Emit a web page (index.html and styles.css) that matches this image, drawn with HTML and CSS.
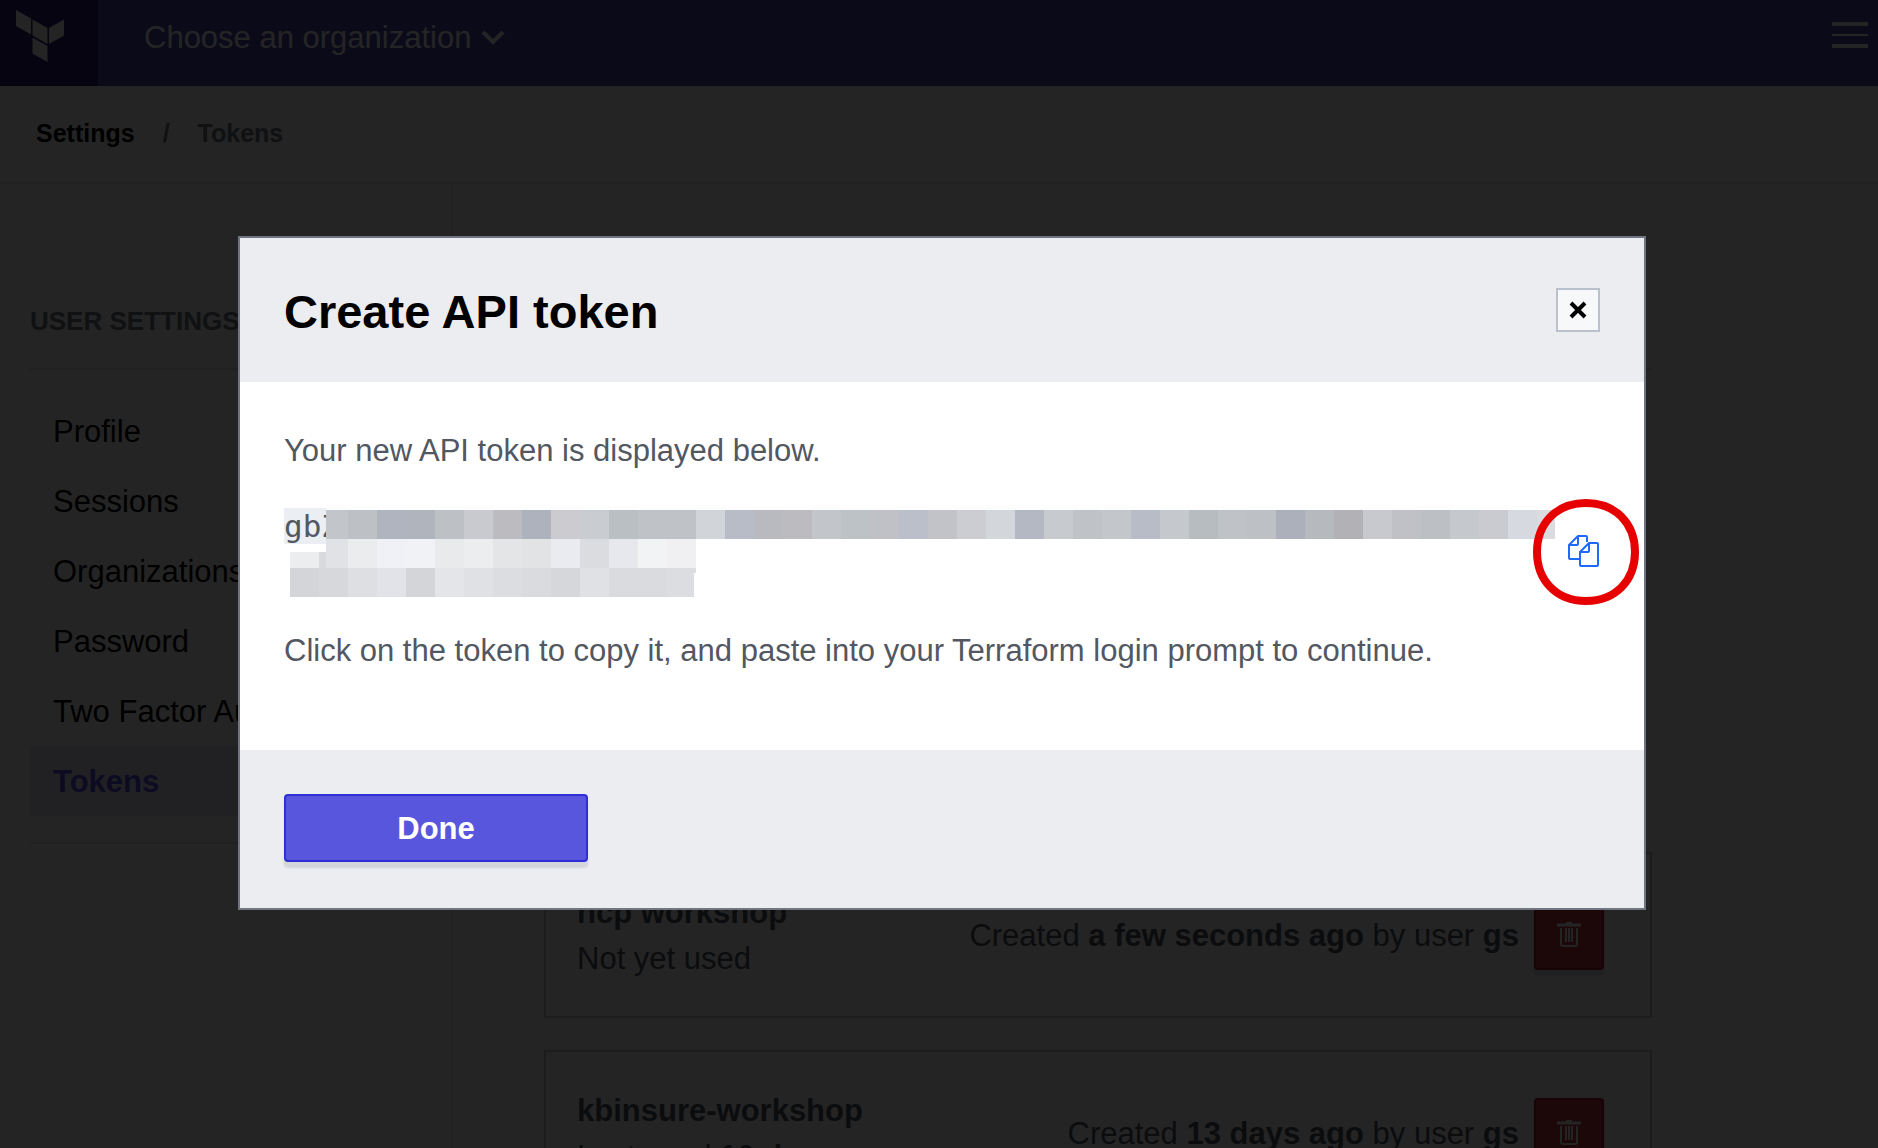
FILE: index.html
```html
<!DOCTYPE html>
<html lang="en">
<head>
<meta charset="utf-8">
<title>Tokens | Settings | Terraform Cloud</title>
<link rel="stylesheet" href="styles.css">
</head>
<body>
<div class="app">
  <header class="topbar">
    <a class="logo" href="#" aria-label="Terraform">
      <svg width="48" height="52" viewBox="0 0 48 52" fill="currentColor" aria-hidden="true">
        <path d="M0 0l15 8.600v16L0 16zM16.500 9.500l15 8.600v16l-15-8.600zM33 18.100l15-8.600v16l-15 8.600zM16.500 27.500l15 8.600V52l-15-8.600z"/>
      </svg>
    </a>
    <button class="org-picker" type="button">Choose an organization
      <svg width="24" height="16" viewBox="0 0 24 16" fill="none" stroke="currentColor" stroke-width="4" aria-hidden="true"><path d="M2 2l10 10L22 2"/></svg>
    </button>
    <button class="menu-button" type="button" aria-label="Menu">
      <svg width="36" height="26" viewBox="0 0 36 26" fill="currentColor" aria-hidden="true"><path d="M0 0h36v4H0zM0 12h36v2H0zM0 22h36v4H0z"/></svg>
    </button>
  </header>

  <nav class="breadcrumb" aria-label="Breadcrumb">
    <a href="#">Settings</a><span>/</span><span>Tokens</span>
  </nav>

  <div class="columns">
    <aside class="sidebar">
      <h2>User settings</h2>
      <ul>
        <li><a href="#">Profile</a></li>
        <li><a href="#">Sessions</a></li>
        <li><a href="#">Organizations</a></li>
        <li><a href="#">Password</a></li>
        <li><a href="#">Two Factor Authentication</a></li>
        <li><a class="active" href="#" aria-current="page">Tokens</a></li>
      </ul>
    </aside>
    <main class="main">
      <div class="page-head"></div>
      <section class="token-list">
        <article class="token-card">
          <div class="token-name"><strong>hcp workshop</strong><span>Not yet used</span></div>
          <p>Created <strong>a few seconds ago</strong> by user <strong>gs</strong></p>
          <button class="delete" type="button" aria-label="Delete hcp workshop">
            <svg width="24" height="26" viewBox="0 0 24 26" fill="none" stroke="currentColor" stroke-width="2" aria-hidden="true"><path d="M9 1h6" /><path d="M0 3h24" stroke-width="3"/><path d="M4 6v16q0 2 2 2h12q2 0 2-2V6M9 6v14M12 6v14M15 6v14"/></svg>
          </button>
        </article>
        <article class="token-card">
          <div class="token-name"><strong>kbinsure-workshop</strong><span>Last used <strong>10 days ago</strong></span></div>
          <p>Created <strong>13 days ago</strong> by user <strong>gs</strong></p>
          <button class="delete" type="button" aria-label="Delete kbinsure-workshop">
            <svg width="24" height="26" viewBox="0 0 24 26" fill="none" stroke="currentColor" stroke-width="2" aria-hidden="true"><path d="M9 1h6" /><path d="M0 3h24" stroke-width="3"/><path d="M4 6v16q0 2 2 2h12q2 0 2-2V6M9 6v14M12 6v14M15 6v14"/></svg>
          </button>
        </article>
      </section>
    </main>
  </div>
</div>

<div class="overlay">
  <div class="modal" role="dialog" aria-modal="true" aria-labelledby="modal-title">
    <header class="modal-head">
      <h1 id="modal-title">Create API token</h1>
      <button class="close" type="button" aria-label="Close">
        <svg width="18" height="18" viewBox="0 0 18 18" fill="none" stroke="currentColor" stroke-width="4" aria-hidden="true"><path d="M2 2l14 14M16 2L2 16"/></svg>
      </button>
    </header>
    <div class="modal-body">
      <p>Your new API token is displayed below.</p>
      <div class="token-row">
        <div class="token">
          <code>gbZ</code>
          <svg class="mask" width="1272" height="92" viewBox="284 505 1272 92" shape-rendering="crispEdges" aria-hidden="true">
            <path fill="#fdfdfd" d="M326 505h1229v5H326z"/>
            <g>
              <rect x="326" y="510" width="22" height="29" fill="#c2c6ca"/>
              <rect x="348" y="510" width="29" height="29" fill="#bdc1c6"/>
              <rect x="377" y="510" width="29" height="29" fill="#b0b4be"/>
              <rect x="406" y="510" width="29" height="29" fill="#b0b4bd"/>
              <rect x="435" y="510" width="29" height="29" fill="#bdc1c6"/>
              <rect x="464" y="510" width="29" height="29" fill="#c9cacf"/>
              <rect x="493" y="510" width="29" height="29" fill="#bbbbc0"/>
              <rect x="522" y="510" width="29" height="29" fill="#aeb2bc"/>
              <rect x="551" y="510" width="29" height="29" fill="#cbcbd0"/>
              <rect x="580" y="510" width="29" height="29" fill="#c9cdd2"/>
              <rect x="609" y="510" width="29" height="29" fill="#babfc4"/>
              <rect x="638" y="510" width="58" height="29" fill="#bfc3c8"/>
              <rect x="696" y="510" width="29" height="29" fill="#d1d5da"/>
              <rect x="725" y="510" width="29" height="29" fill="#b8bcc6"/>
              <rect x="754" y="510" width="29" height="29" fill="#b9babf"/>
              <rect x="783" y="510" width="29" height="29" fill="#bbbbc0"/>
              <rect x="812" y="510" width="29" height="29" fill="#c2c6cb"/>
              <rect x="841" y="510" width="29" height="29" fill="#bdc2c7"/>
              <rect x="870" y="510" width="29" height="29" fill="#c0c1c6"/>
              <rect x="899" y="510" width="29" height="29" fill="#bbbfca"/>
              <rect x="928" y="510" width="29" height="29" fill="#c2c3c8"/>
              <rect x="957" y="510" width="29" height="29" fill="#cccdd2"/>
              <rect x="986" y="510" width="29" height="29" fill="#d3d7dc"/>
              <rect x="1015" y="510" width="29" height="29" fill="#b4b8c2"/>
              <rect x="1044" y="510" width="29" height="29" fill="#c7cbd0"/>
              <rect x="1073" y="510" width="29" height="29" fill="#bfc3c8"/>
              <rect x="1102" y="510" width="29" height="29" fill="#c3c7cc"/>
              <rect x="1131" y="510" width="29" height="29" fill="#b8bcc6"/>
              <rect x="1160" y="510" width="29" height="29" fill="#c5c9ce"/>
              <rect x="1189" y="510" width="29" height="29" fill="#b7bcc1"/>
              <rect x="1218" y="510" width="29" height="29" fill="#bfc3c8"/>
              <rect x="1247" y="510" width="29" height="29" fill="#bdc1c6"/>
              <rect x="1276" y="510" width="29" height="29" fill="#acb0ba"/>
              <rect x="1305" y="510" width="29" height="29" fill="#b6babf"/>
              <rect x="1334" y="510" width="29" height="29" fill="#b1b1b6"/>
              <rect x="1363" y="510" width="29" height="29" fill="#c8c9ce"/>
              <rect x="1392" y="510" width="29" height="29" fill="#c0c1c6"/>
              <rect x="1421" y="510" width="29" height="29" fill="#bcc0c5"/>
              <rect x="1450" y="510" width="29" height="29" fill="#c5c9ce"/>
              <rect x="1479" y="510" width="29" height="29" fill="#cacbd0"/>
              <rect x="1508" y="510" width="29" height="29" fill="#d6dae0"/>
              <rect x="1537" y="510" width="18" height="29" fill="#dbdcdf"/>
            </g>
            <g>
              <rect x="290" y="552" width="29" height="16" fill="#ecedee"/>
              <rect x="319" y="552" width="7" height="16" fill="#d9dade"/>
              <rect x="326" y="539" width="22" height="29" fill="#e1e2e6"/>
              <rect x="348" y="539" width="29" height="29" fill="#ebecee"/>
              <rect x="377" y="539" width="29" height="29" fill="#eff1f6"/>
              <rect x="406" y="539" width="29" height="29" fill="#f1f2f5"/>
              <rect x="435" y="539" width="29" height="29" fill="#e8eaec"/>
              <rect x="464" y="539" width="29" height="29" fill="#ecedef"/>
              <rect x="493" y="539" width="29" height="29" fill="#e4e5e7"/>
              <rect x="522" y="539" width="29" height="29" fill="#e2e3e5"/>
              <rect x="551" y="539" width="29" height="29" fill="#e9ebf0"/>
              <rect x="580" y="539" width="29" height="29" fill="#dbdce0"/>
              <rect x="609" y="539" width="29" height="29" fill="#e6e8ed"/>
              <rect x="638" y="539" width="29" height="29" fill="#f2f3f5"/>
              <rect x="667" y="539" width="29" height="29" fill="#f0f0f3"/>
            </g>
            <g>
              <rect x="290" y="568" width="29" height="29" fill="#d4d5d9"/>
              <rect x="319" y="568" width="29" height="29" fill="#d7d8dc"/>
              <rect x="348" y="568" width="29" height="29" fill="#dddfe3"/>
              <rect x="377" y="568" width="29" height="29" fill="#e2e3e8"/>
              <rect x="406" y="568" width="29" height="29" fill="#d4d5d9"/>
              <rect x="435" y="568" width="29" height="29" fill="#e4e5e9"/>
              <rect x="464" y="568" width="29" height="29" fill="#dfe1e5"/>
              <rect x="493" y="568" width="29" height="29" fill="#dcdde1"/>
              <rect x="522" y="568" width="29" height="29" fill="#dadbdf"/>
              <rect x="551" y="568" width="29" height="29" fill="#d6d7db"/>
              <rect x="580" y="568" width="29" height="29" fill="#e0e1e5"/>
              <rect x="609" y="568" width="58" height="29" fill="#dadbdf"/>
              <rect x="667" y="568" width="27" height="29" fill="#dcdde1"/>
              <rect x="694" y="568" width="2" height="5" fill="#dcdde1"/>
            </g>
          </svg>
        </div>
        <button class="copy" type="button" aria-label="Copy token">
          <svg width="32" height="32" viewBox="0 0 32 32" fill="none" stroke="currentColor" stroke-width="2" stroke-linejoin="round" aria-hidden="true">
            <path d="M12 24H2q-1 0-1-1V10l9-9h8q1 0 1 1v5M10 1v8q0 1-1 1H1"/>
            <path d="M21 8h8q1 0 1 1v21q0 1-1 1H13q-1 0-1-1V17zM21 8v8q0 1-1 1h-8"/>
          </svg>
          <svg class="ring" width="106" height="106" viewBox="0 0 106 106" fill="none" stroke="#e60000" stroke-width="8" aria-hidden="true"><path d="M53 4C83 4 102 25 102 53S83 102 53 102 4 81 4 53 23 4 53 4z"/></svg>
        </button>
      </div>
      <p>Click on the token to copy it, and paste into your Terraform login prompt to continue.</p>
    </div>
    <footer class="modal-foot">
      <button class="done" type="button">Done</button>
    </footer>
  </div>
</div>
</body>
</html>
```
FILE: styles.css
```css
* {
  box-sizing: border-box;
}

body {
  margin: 0;
  overflow: hidden;
  background: #fff;
  color: #525761;
  font-family: "Liberation Sans", Arial, Helvetica, sans-serif;
  font-size: 31px;
  line-height: 46px;
}

h1, h2, p, ul {
  margin: 0;
  padding: 0;
}

button {
  padding: 0;
  border: 0;
  background: none;
  color: inherit;
  font: inherit;
  cursor: pointer;
}

a {
  color: inherit;
  text-decoration: none;
}

svg {
  display: block;
}

.app {
  display: flex;
  flex-direction: column;
  height: 100vh;
  overflow: hidden;
}

/* Top bar */
.topbar {
  display: flex;
  flex: none;
  align-items: flex-start;
  height: 86px;
  padding-right: 10px;
  background: #4f47b3;
  color: #fff;
}

.logo {
  width: 98px;
  height: 86px;
  padding: 10px 16px;
  background: #2b1d72;
}

.org-picker {
  display: flex;
  align-items: center;
  gap: 10px;
  margin: 15px auto 0 46px;
}

.menu-button {
  margin-top: 22px;
}

/* Breadcrumb */
.breadcrumb {
  display: flex;
  flex: none;
  gap: 28px;
  height: 98px;
  padding: 24px 36px;
  border-bottom: 2px solid #e5e5e5;
  color: #6f7682;
  font-size: 25px;
  font-weight: bold;
}

.breadcrumb a {
  color: #000;
}

/* Columns */
.columns {
  display: flex;
  flex: 1;
  min-height: 0;
}

.sidebar {
  flex: none;
  width: 453px;
  padding: 114px 30px 0;
  border-right: 2px solid #e5e5e5;
}

.sidebar h2 {
  padding-bottom: 24px;
  border-bottom: 2px solid #dce0e6;
  color: #6f7682;
  font-size: 26px;
  text-transform: uppercase;
}

.sidebar ul {
  padding: 26px 0;
  border-bottom: 2px solid #dce0e6;
  color: #000;
  list-style: none;
}

.sidebar li a {
  display: block;
  padding: 13px 23px 11px;
  white-space: nowrap;
}

.sidebar .active {
  background: #e8e8fc;
  color: #5c4ee5;
  font-weight: bold;
}

.main {
  flex: 1;
  padding: 0 226px 0 91px;
}

.page-head {
  height: 186px;
  border-bottom: 2px solid #dce0e6;
}

.token-list {
  display: grid;
  gap: 32px;
  margin-top: 482px;
}

.token-card {
  display: flex;
  align-items: center;
  gap: 15px;
  height: 166px;
  padding: 0 46px 0 31px;
  border: 2px solid #c8c8cc;
}

.token-card p,
.token-name {
  padding-top: 2px;
}

.token-name {
  display: grid;
  margin-right: auto;
}

.delete {
  display: grid;
  place-items: center;
  width: 70px;
  height: 70px;
  border: 2px solid #a01828;
  border-radius: 4px;
  background: #c73445;
  box-shadow: 0 6px 2px #dce0e6;
  color: #fff;
}

/* Dialog */
.overlay {
  position: fixed;
  inset: 0;
  padding: 236px 232px 0 238px;
  background: rgb(0 0 0 / 86%);
}

.modal {
  border: 2px solid #6f7682;
  background: #fff;
}

.modal-head {
  display: flex;
  align-items: center;
  justify-content: space-between;
  height: 144px;
  padding: 0 44px;
  background: #ebedf1;
}

.modal-head h1 {
  padding-top: 4px;
  color: #000;
  font-size: 47px;
  line-height: 56px;
}

.close {
  display: grid;
  place-items: center;
  width: 44px;
  height: 44px;
  border: 2px solid #bac1cc;
  background: #f7f8fa;
  color: #000;
}

.modal-body {
  display: flex;
  flex-direction: column;
  gap: 34px;
  padding: 46px 44px 76px;
}

.token-row {
  display: flex;
  align-items: center;
  justify-content: space-between;
  height: 86px;
}

.token {
  position: relative;
  align-self: flex-start;
  height: 36px;
}

.token code {
  display: block;
  background: #ebeef2;
  font-family: "DejaVu Sans Mono", monospace;
  font-size: 31px;
  line-height: 36px;
}

.mask {
  position: absolute;
  top: -3px;
  left: 0;
}

.copy {
  position: relative;
  color: #1f69ff;
}

.ring {
  position: absolute;
  top: -36px;
  left: -35px;
}

.modal-foot {
  padding: 44px 44px 46px;
  background: #ebedf1;
}

.done {
  display: block;
  width: 304px;
  height: 68px;
  padding-top: 2px;
  border: 2px solid #2e2fd6;
  border-radius: 4px;
  background: #5956de;
  box-shadow: 0 6px 2px #d3d6db;
  color: #fff;
  font-weight: bold;
}
```
